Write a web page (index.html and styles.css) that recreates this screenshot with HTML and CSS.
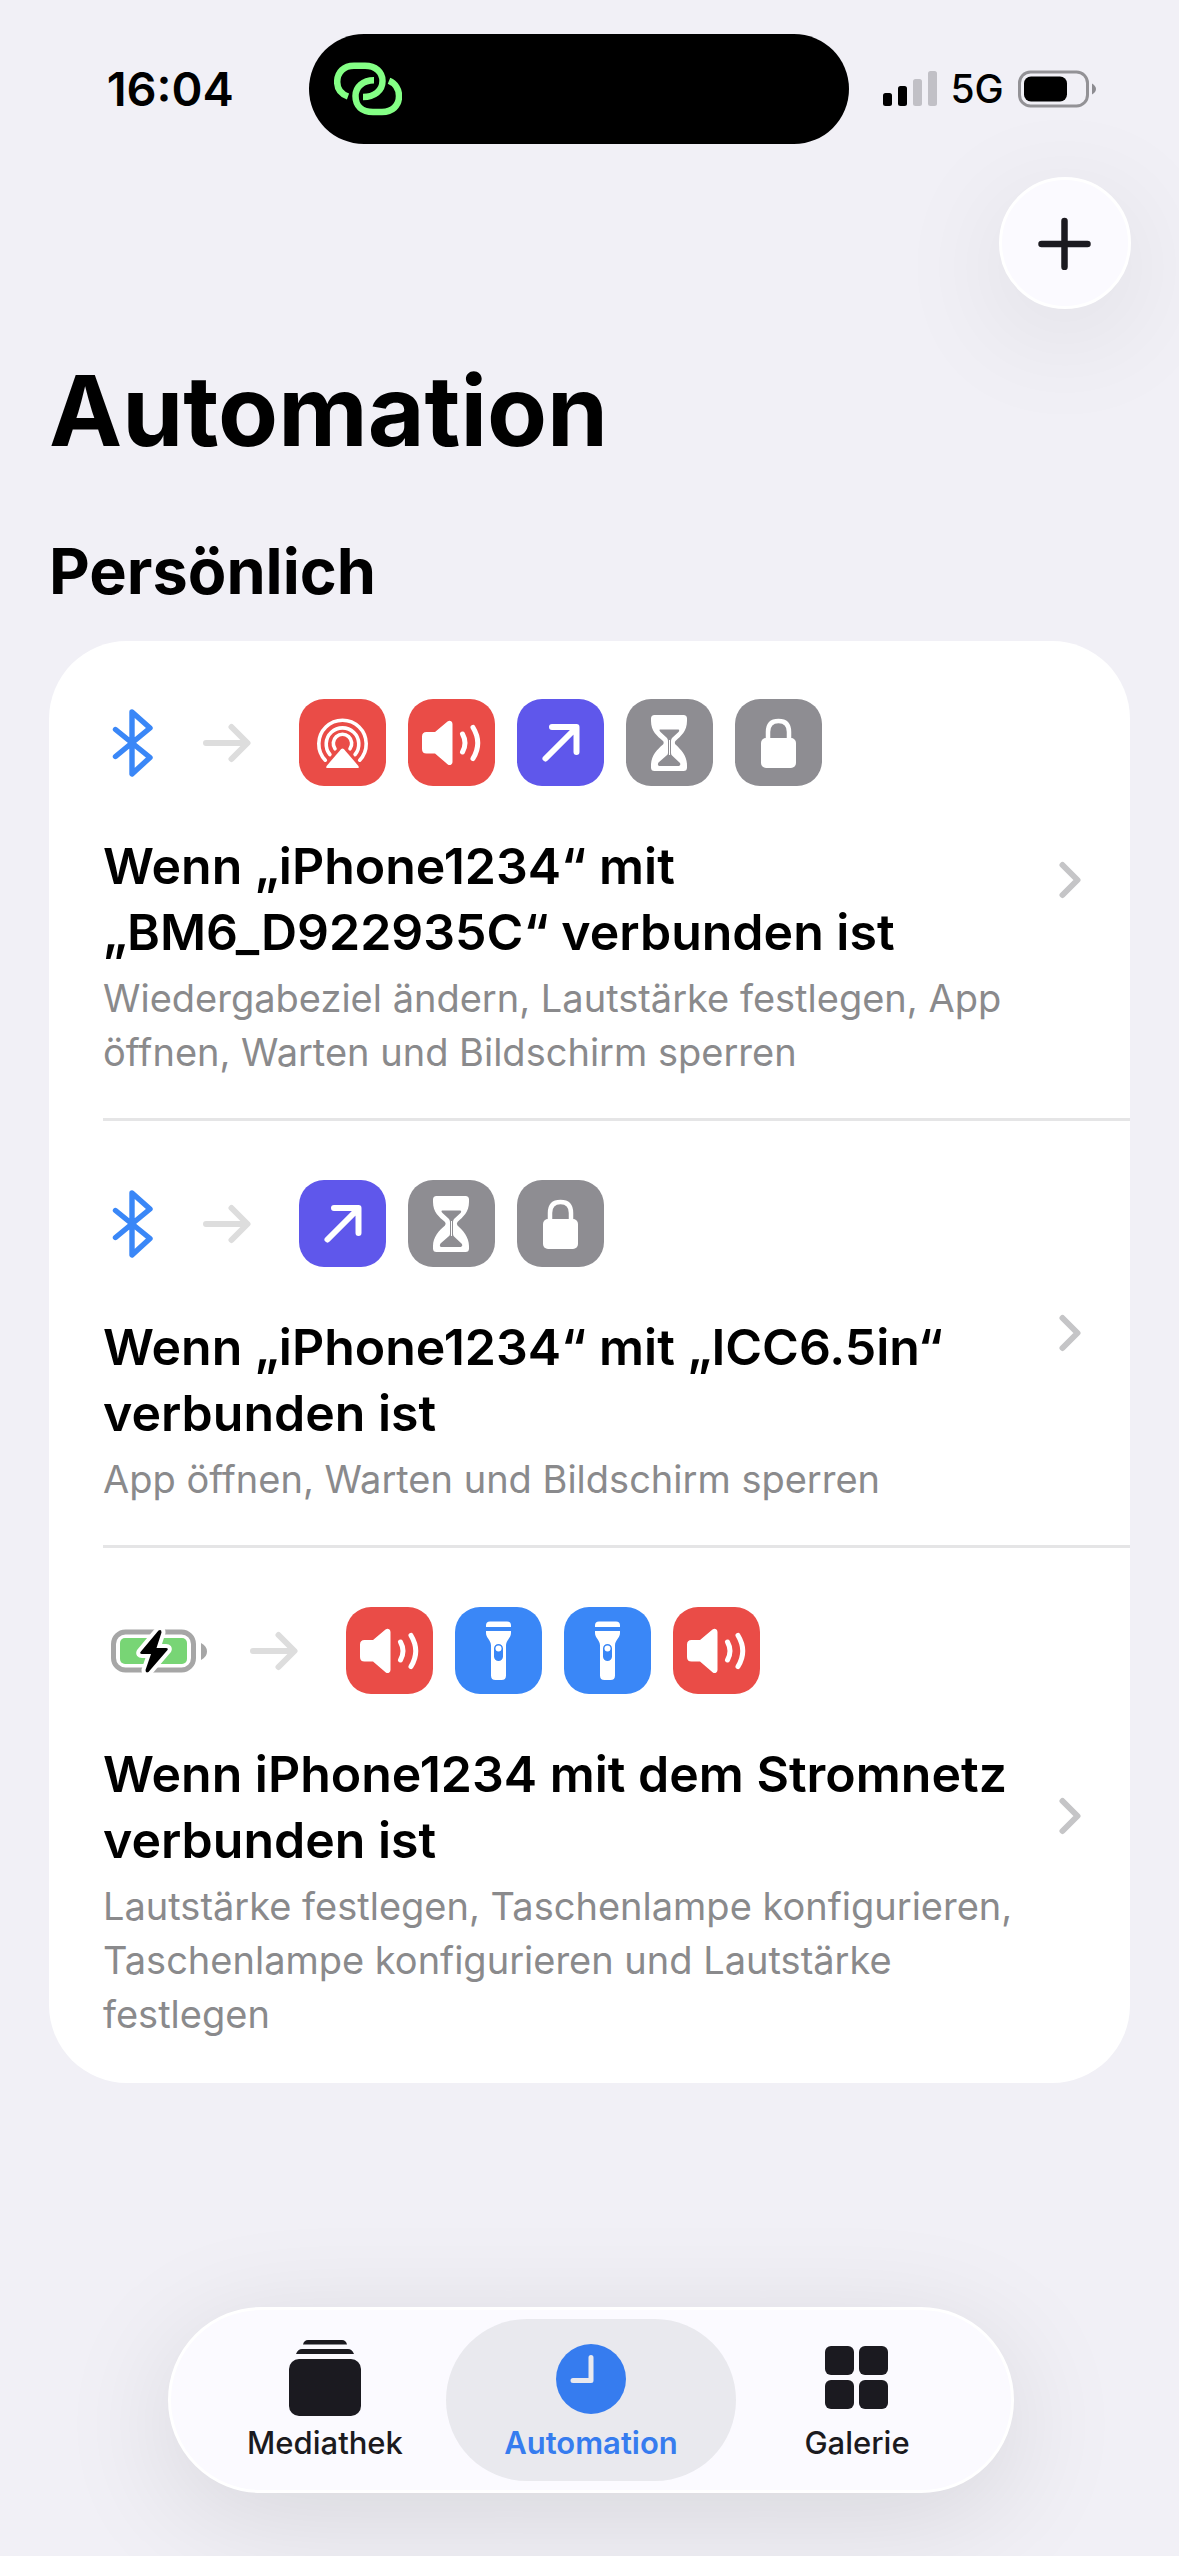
FILE: index.html
```html
<!DOCTYPE html>
<html lang="de">
<head>
<meta charset="utf-8">
<meta name="viewport" content="width=device-width, initial-scale=1">
<title>Automation</title>
<link rel="stylesheet" href="styles.css">
</head>
<body>
<svg class="sprite" aria-hidden="true">
  <symbol id="bluetooth" viewBox="0 0 40 68">
    <path d="M2.500 20.500 37 48.500 19 65V3L37 19 2.500 47.500" fill="none" stroke="currentColor" stroke-width="5.400" stroke-linecap="round" stroke-linejoin="round"/>
  </symbol>
  <symbol id="arrow" viewBox="0 0 48 40">
    <path d="M3 20H44M28.500 4 44.500 20 28.500 36" fill="none" stroke="currentColor" stroke-width="6" stroke-linecap="round" stroke-linejoin="round"/>
  </symbol>
  <symbol id="airplay" viewBox="0 0 87 87">
    <g fill="none" stroke="currentColor" stroke-width="3.600" stroke-linecap="round">
      <path d="M26.300 61.200A23.700 23.700 0 1 1 60.700 61.200"/>
      <path d="M30.900 55.500A16.300 16.300 0 1 1 56.100 55.500"/>
      <path d="M36 49.800A9.200 9.200 0 1 1 51 49.800"/>
    </g>
    <path d="M42.200 50.100Q43.500 48.700 44.800 50.100L59.400 66.900Q60.500 69 58.500 69H28.500Q26.500 69 27.600 66.900Z" fill="currentColor"/>
  </symbol>
  <symbol id="speaker" viewBox="0 0 87 87">
    <path d="M18.500 33H27L39.500 22.500Q41.500 21 43.200 22.300Q44.500 23.300 44.500 25V63Q44.500 64.800 43 65.700Q41.300 66.700 39.500 65.200L27 54.500H18.500Q14 54.500 14 50V37.500Q14 33 18.500 33Z" fill="currentColor"/>
    <path d="M54.500 35Q59.500 44 54.500 53M65 28.500Q74.500 44 65 59.500" fill="none" stroke="currentColor" stroke-width="5" stroke-linecap="round"/>
  </symbol>
  <symbol id="open" viewBox="0 0 87 87">
    <path d="M28.500 59.500 58 30M35 28H59.500V53" fill="none" stroke="currentColor" stroke-width="6" stroke-linecap="round" stroke-linejoin="round"/>
  </symbol>
  <symbol id="hourglass" viewBox="0 0 87 87">
    <path fill="currentColor" fill-rule="evenodd" d="M28.500 16H57.500Q61 16 61 19.500V22C61 32 55 37 49.500 42Q48.200 43.500 49.500 45.500C55 50.500 61 57 61 66V68.500Q61 72 57.500 72H28.500Q25 72 25 68.500V66C25 57 31 50.500 37 45.500Q38.300 43.500 37 42C31 37 25 32 25 22V19.500Q25 16 28.500 16ZM34 30.500C33 31 33.500 32 34.500 33L41 39Q42 40.500 42 42V54Q42 55.500 40.500 56.500L32.500 63.500Q31 66 33 67H53Q55 66 54 64L46 56.500Q45 55.500 45 54V42Q45 40.500 46 39L52.500 33C53.500 32 53.500 30.500 52 30.500Z"/>
    <path d="M43.500 41V56" stroke="currentColor" stroke-width="1"/>
  </symbol>
  <symbol id="lock" viewBox="0 0 87 87">
    <path d="M33 42V33Q33 22 43.500 22Q54 22 54 33V42" fill="none" stroke="currentColor" stroke-width="4.500"/>
    <rect x="26" y="39" width="35" height="30" rx="5" fill="currentColor"/>
  </symbol>
  <symbol id="torch" viewBox="0 0 87 87">
    <path d="M35 14.500H52Q56 14.500 56 18.500V20H31V18.500Q31 14.500 35 14.500Z" fill="currentColor"/>
    <path fill="currentColor" fill-rule="evenodd" d="M31 24H56V26C56 31 51 33 51 38.500V68.500Q51 73 46.500 73H40.500Q36 73 36 68.500V38.500C36 33 31 31 31 26ZM39 41.500V49.500A4.500 4.500 0 0 0 48 49.500V41.500A4.500 4.500 0 0 0 39 41.500Z"/>
    <circle cx="43.500" cy="41.500" r="3" fill="currentColor"/>
  </symbol>
  <symbol id="chevron" viewBox="0 0 24 38">
    <path d="M4.500 4 19.500 19 4.500 34" fill="none" stroke="currentColor" stroke-width="6" stroke-linecap="round" stroke-linejoin="round"/>
  </symbol>
</svg>

<div class="screen">
  <header class="status">
    <time class="clock">16:04</time>
    <div class="island">
      <svg class="link-icon" viewBox="0 0 68 54" aria-hidden="true">
        <g fill="none" stroke="#84ff85" stroke-width="6.500">
          <path d="M14 34.500C7 32 3.200 26.500 3.200 20C3.200 10 10 3.700 20 3.700H31C41.500 3.700 48.500 10 48.500 19C48.500 29 40 35 29 35"/>
          <path d="M40 18.200C29 18.200 21.500 25 21.500 34C21.500 44 28 50 39 50H48C58 50 65 44 65 34C65 27.500 61.500 21.500 55 18.800"/>
        </g>
      </svg>
    </div>
    <div class="indicators">
      <svg class="signal" viewBox="0 0 54 36" aria-hidden="true">
        <rect y="22" width="9" height="13" rx="2.500"/>
        <rect x="15" y="15" width="9" height="20" rx="2.500"/>
        <g fill="#c1c0c6"><rect x="30" y="8" width="9" height="27" rx="2.500"/><rect x="45" width="9" height="35" rx="2.500"/></g>
      </svg>
      <span class="network">5G</span>
      <svg class="battery" viewBox="0 0 78 38" aria-hidden="true">
        <rect x="1.500" y="2" width="68" height="34" rx="11" fill="none" stroke="#939296" stroke-width="3"/>
        <rect x="6" y="6.500" width="43" height="25" rx="7"/>
        <path d="M74 13.500Q78 16 78 19T74 24.500Z" fill="#8d8c91"/>
      </svg>
    </div>
  </header>

  <div class="toolbar">
    <button class="add" type="button" aria-label="Automation hinzufügen">
      <svg viewBox="0 0 54 54" aria-hidden="true"><path d="M26.500 5V51M3.500 28H49.500" stroke="#1b1a20" stroke-width="6.500" stroke-linecap="round"/></svg>
    </button>
  </div>

  <main class="content">
    <h1>Automation</h1>
    <h2>Persönlich</h2>
    <ul class="card">
      <li class="item">
        <a class="item-link" href="#bm6">
          <div class="item-body">
            <div class="flow">
              <svg class="trigger-bluetooth"><use href="#bluetooth"/></svg>
              <svg class="arrow"><use href="#arrow"/></svg>
              <div class="actions">
                <svg class="tile red"><use href="#airplay"/></svg>
                <svg class="tile red"><use href="#speaker"/></svg>
                <svg class="tile indigo"><use href="#open"/></svg>
                <svg class="tile gray"><use href="#hourglass"/></svg>
                <svg class="tile gray"><use href="#lock"/></svg>
              </div>
            </div>
            <h3>Wenn „iPhone1234“ mit „BM6_D922935C“ verbunden ist</h3>
            <p>Wiedergabeziel ändern, Lautstärke festlegen, App öffnen, Warten und Bildschirm sperren</p>
          </div>
          <svg class="chevron"><use href="#chevron"/></svg>
        </a>
      </li>
      <li class="item">
        <a class="item-link" href="#icc">
          <div class="item-body">
            <div class="flow">
              <svg class="trigger-bluetooth"><use href="#bluetooth"/></svg>
              <svg class="arrow"><use href="#arrow"/></svg>
              <div class="actions">
                <svg class="tile indigo"><use href="#open"/></svg>
                <svg class="tile gray"><use href="#hourglass"/></svg>
                <svg class="tile gray"><use href="#lock"/></svg>
              </div>
            </div>
            <h3>Wenn „iPhone1234“ mit „ICC6.5in“ verbunden ist</h3>
            <p>App öffnen, Warten und Bildschirm sperren</p>
          </div>
          <svg class="chevron"><use href="#chevron"/></svg>
        </a>
      </li>
      <li class="item">
        <a class="item-link" href="#strom">
          <div class="item-body">
            <div class="flow">
              <svg class="trigger-power" viewBox="0 0 96 44" aria-hidden="true">
                <rect x="2.500" y="3" width="80" height="38" rx="12" fill="none" stroke="#a6a6a6" stroke-width="5"/>
                <rect x="9" y="9" width="67" height="26" rx="5" fill="#78d575"/>
                <path d="M90 14Q96 17 96 22.500T90 31Z" fill="#a6a6a6"/>
                <path d="M47.500 1.500 29.500 23Q28.500 25 31 25H40L34.500 41Q34.500 44.500 37.500 43L56.500 21Q57.500 19 55 19H45.500L50.500 3.500Q50.500 0 47.500 1.500Z" fill="#000" stroke="#fff" stroke-width="8" stroke-linejoin="round" paint-order="stroke"/>
              </svg>
              <svg class="arrow"><use href="#arrow"/></svg>
              <div class="actions">
                <svg class="tile red"><use href="#speaker"/></svg>
                <svg class="tile blue"><use href="#torch"/></svg>
                <svg class="tile blue"><use href="#torch"/></svg>
                <svg class="tile red"><use href="#speaker"/></svg>
              </div>
            </div>
            <h3>Wenn iPhone1234 mit dem Stromnetz verbunden ist</h3>
            <p>Lautstärke festlegen, Taschenlampe konfigurieren, Taschenlampe konfigurieren und Lautstärke festlegen</p>
          </div>
          <svg class="chevron"><use href="#chevron"/></svg>
        </a>
      </li>
    </ul>
  </main>

  <nav class="tabs">
    <a class="tab" href="#mediathek">
      <svg viewBox="0 0 72 78" aria-hidden="true"><path d="M14 5.500Q15 1 19 1H53Q57 1 58 5.500ZM7 15Q9 10 13 10H59Q63 10 65 15Z"/><rect y="20" width="72" height="57" rx="10"/></svg>
      <span>Mediathek</span>
    </a>
    <a class="tab active" href="#automation" aria-current="page">
      <svg viewBox="0 0 72 78" aria-hidden="true"><circle cx="36" cy="40" r="35"/><path d="M36 18.500V41.500H18" fill="none" stroke="#e9e9ee" stroke-width="5" stroke-linecap="round" stroke-linejoin="round"/></svg>
      <span>Automation</span>
    </a>
    <a class="tab" href="#galerie">
      <svg viewBox="0 0 72 78" aria-hidden="true"><rect x="4" y="7" width="29" height="29" rx="6"/><rect x="38" y="7" width="29" height="29" rx="6"/><rect x="4" y="41" width="29" height="29" rx="6"/><rect x="38" y="41" width="29" height="29" rx="6"/></svg>
      <span>Galerie</span>
    </a>
  </nav>
</div>
</body>
</html>
```

FILE: styles.css
```css
* {
  box-sizing: border-box;
}

body {
  margin: 0;
  background: #f1f0f6;
  color: #000;
  font-family: Inter, "Liberation Sans", sans-serif;
}

a {
  color: inherit;
  text-decoration: none;
}

h1,
h2,
h3,
p,
ul {
  margin: 0;
  padding: 0;
}

svg {
  display: block;
  flex: none;
}

.sprite {
  position: absolute;
  width: 0;
  height: 0;
}

.screen {
  display: flex;
  flex-direction: column;
  min-height: 100vh;
  overflow-x: hidden;
}

/* Status bar */
.status {
  display: grid;
  grid-template-columns: 1fr 540px 1fr;
  align-items: center;
  padding: 34px 22px 0 0;
}

.clock {
  padding-left: 32px;
  text-align: center;
  font-size: 47px;
  font-weight: 600;
  line-height: 54px;
}

.island {
  display: flex;
  align-items: center;
  height: 110px;
  padding-left: 25px;
  border-radius: 55px;
  background: #000;
}

.link-icon {
  width: 68px;
  height: 54px;
}

.indicators {
  display: flex;
  align-items: center;
  gap: 14px;
  padding-left: 34px;
}

.signal {
  width: 54px;
  height: 36px;
}

.network {
  font-size: 39px;
  font-weight: 500;
  line-height: 48px;
}

.battery {
  width: 78px;
  height: 38px;
}

/* Toolbar */
.toolbar {
  display: flex;
  justify-content: flex-end;
  padding: 33px 48px 0;
}

.add {
  display: grid;
  place-items: center;
  width: 132px;
  height: 132px;
  padding: 0;
  border: 3px solid #fff;
  border-radius: 50%;
  background: #fbfaff;
  box-shadow: 0 24px 120px rgba(0, 0, 0, 0.09);
}

.add svg {
  width: 54px;
  height: 54px;
}

/* Content */
.content {
  padding: 42px 49px 48px;
}

h1 {
  font-size: 98px;
  font-weight: 700;
  line-height: 120px;
}

h2 {
  margin-top: 60px;
  font-size: 63px;
  font-weight: 700;
  line-height: 80px;
}

.card {
  margin-top: 30px;
  padding-left: 54px;
  border-radius: 78px;
  background: #fff;
  list-style: none;
}

.item + .item {
  border-top: 3px solid #e5e5e6;
}

.item-link {
  display: flex;
  align-items: center;
  justify-content: space-between;
  padding-right: 48px;
}

.item-body {
  flex: 1;
  min-width: 0;
  padding: 59px 0 39px;
}

.item:first-child .item-body {
  padding-top: 58px;
}

.item:last-child .item-body {
  padding-bottom: 42px;
}

.flow {
  display: flex;
  align-items: center;
  gap: 48px;
  padding-left: 8px;
}

.trigger-bluetooth {
  width: 44px;
  height: 68px;
  color: #3a87f7;
}

.trigger-power {
  width: 96px;
  height: 44px;
  margin-right: -5px;
}

.arrow {
  width: 48px;
  height: 40px;
  color: #ddd;
}

.actions {
  display: flex;
  gap: 22px;
}

.tile {
  width: 87px;
  height: 87px;
  border-radius: 25px;
  color: #fff;
}

.red {
  background: #ea4c47;
}

.indigo {
  background: #5f57eb;
}

.gray {
  background: #8e8d92;
}

.blue {
  background: #3a87f7;
}

h3 {
  margin-top: 47px;
  font-size: 50px;
  font-weight: 600;
  line-height: 66px;
}

p {
  margin-top: 6px;
  color: #8a8a8c;
  font-size: 38px;
  line-height: 54px;
}

.chevron {
  width: 24px;
  height: 38px;
  color: #c5c5c7;
}

/* Tab bar */
.tabs {
  display: flex;
  margin: auto 165px 63px 168px;
  padding: 9px 21px;
  border: 3px solid #fff;
  border-radius: 93px;
  background: #fbfaff;
  box-shadow: 0 24px 120px rgba(0, 0, 0, 0.11);
}

.tab {
  display: flex;
  flex: 1;
  flex-direction: column;
  align-items: center;
  gap: 7px;
  height: 162px;
  margin: 0 -12px;
  padding-top: 20px;
  border-radius: 81px;
  color: #1b1a20;
  fill: currentColor;
  font-size: 31px;
  font-weight: 500;
  line-height: 38px;
}

.tab svg {
  width: 72px;
  height: 78px;
}

.tab.active {
  background: #e9e9ee;
  color: #367cef;
  font-weight: 600;
}
```
